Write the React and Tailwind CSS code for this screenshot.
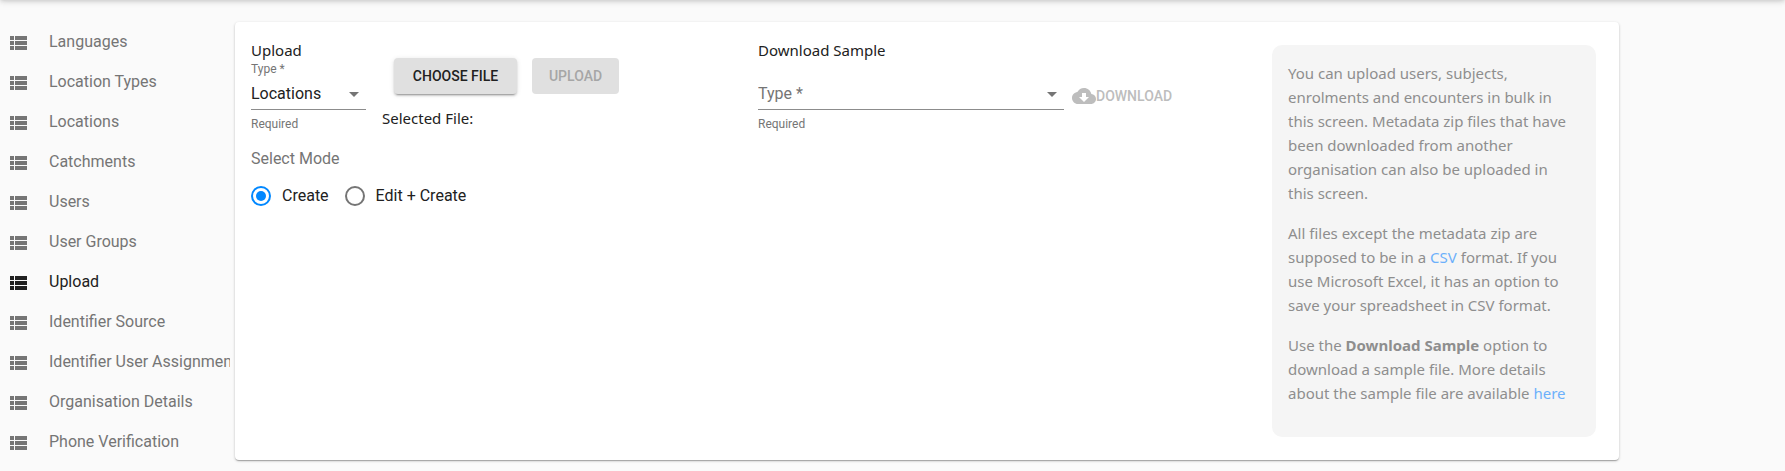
import { useState } from "react";

const NAV_ITEMS = [
  "Languages",
  "Location Types",
  "Locations",
  "Catchments",
  "Users",
  "User Groups",
  "Upload",
  "Identifier Source",
  "Identifier User Assignment",
  "Organisation Details",
  "Phone Verification",
];

function ListIcon() {
  return (
    <svg viewBox="0 0 24 24" className="mt-0.5 size-6 shrink-0 fill-current" aria-hidden="true">
      <path d="M4 14h4v-4H4v4zm0 5h4v-4H4v4zM4 9h4V5H4v4zm5 5h12v-4H9v4zm0 5h12v-4H9v4zM9 5v4h12V5H9z" />
    </svg>
  );
}

function ArrowIcon() {
  return (
    <svg viewBox="0 0 24 24" className="pointer-events-none absolute right-0 top-0 size-6 fill-[#757575]" aria-hidden="true">
      <path d="M7 10l5 5 5-5z" />
    </svg>
  );
}

function SideNav() {
  return (
    <nav className="w-[230px] shrink-0 overflow-hidden pt-[22px]">
      <ul>
        {NAV_ITEMS.map((item) => (
          <li key={item}>
            <a
              href="#"
              aria-current={item === "Upload" ? "page" : undefined}
              className={
                "flex h-10 items-center gap-[19px] whitespace-nowrap pl-1.5 " +
                (item === "Upload" ? "text-[#212121]" : "text-[#757575]")
              }
            >
              <ListIcon />
              <span>{item}</span>
            </a>
          </li>
        ))}
      </ul>
    </nav>
  );
}

function TypeSelect({ id, value, options, onChange }) {
  return (
    <div>
      <label
        htmlFor={id}
        className={"block h-4 text-xs leading-4 text-[#757575] " + (value ? "" : "invisible")}
      >
        Type *
      </label>
      <div className="relative mt-[5px] border-b border-[#8c8c8c] pb-[3px]">
        <select
          id={id}
          aria-label="Type"
          value={value}
          onChange={(e) => onChange(e.target.value)}
          className={
            "block h-6 w-full appearance-none bg-transparent pr-6 outline-none " +
            (value ? "text-[#212121]" : "text-[#757575]")
          }
        >
          <option value="">Type *</option>
          {options.map((o) => (
            <option key={o}>{o}</option>
          ))}
        </select>
        <ArrowIcon />
      </div>
      <p className="mt-1.5 text-xs leading-4 text-[#757575]">Required</p>
    </div>
  );
}

function ModeRadio({ label, checked, onChange }) {
  return (
    <label className="flex items-center gap-[11px]">
      <input
        type="radio"
        name="mode"
        checked={checked}
        onChange={onChange}
        className="size-5 appearance-none rounded-full border-2 border-[#757575] p-[3px] checked:border-[#0288ff] checked:bg-[#0288ff] bg-clip-content"
      />
      {label}
    </label>
  );
}

export default function App() {
  const [uploadType, setUploadType] = useState("Locations");
  const [sampleType, setSampleType] = useState("");
  const [mode, setMode] = useState("create");

  return (
    <div className="flex min-h-screen flex-col bg-[#fafafa] font-[Roboto,sans-serif] text-base text-[#212121]">
      <header className="-mt-[66px] mb-0.5 h-16 bg-white shadow-[0_2px_4px_-1px_rgba(0,0,0,0.14),0_4px_5px_0_rgba(0,0,0,0.1),0_1px_10px_0_rgba(0,0,0,0.1)]" />
      <div className="flex items-start gap-[5px]">
        <SideNav />
        <main className="mr-[166px] mt-[22px] flex flex-1 items-start rounded bg-white shadow-[0_1px_3px_0_rgba(0,0,0,0.2),0_1px_1px_0_rgba(0,0,0,0.14),0_2px_1px_-1px_rgba(0,0,0,0.12)]">
          <div className="flex flex-1 pl-4 pt-4">
            <section className="flex-1">
              <div className="flex">
                <div className="w-[115px]">
                  <h2 className="h-[23px] font-['Noto_Sans',sans-serif] text-[15px] leading-6">Upload</h2>
                  <TypeSelect id="upload-type" value={uploadType} options={["Locations", "Users"]} onChange={setUploadType} />
                </div>
                <div className="pl-4 pt-5">
                  <div className="flex gap-[15px] pl-3 text-sm font-medium">
                    <button type="button" className="h-9 w-[123px] rounded bg-[#e0e0e0] shadow-[0_3px_1px_-2px_rgba(0,0,0,0.2),0_2px_2px_0_rgba(0,0,0,0.14),0_1px_5px_0_rgba(0,0,0,0.12)]">
                      CHOOSE FILE
                    </button>
                    <button type="button" disabled className="h-9 w-[87px] rounded bg-[#e0e0e0] text-[#a6a6a6]">
                      UPLOAD
                    </button>
                  </div>
                  <p className="mt-3 font-['Noto_Sans',sans-serif] text-[15px] leading-6">Selected File:</p>
                </div>
              </div>
              <fieldset className="mt-[15px]">
                <legend className="leading-6 text-[#757575]">Select Mode</legend>
                <div className="mt-[13px] flex gap-4">
                  <ModeRadio label="Create" checked={mode === "create"} onChange={() => setMode("create")} />
                  <ModeRadio label="Edit + Create" checked={mode === "edit"} onChange={() => setMode("edit")} />
                </div>
              </fieldset>
            </section>
            <section className="flex-1">
              <h2 className="h-[23px] font-['Noto_Sans',sans-serif] text-[15px] leading-6">Download Sample</h2>
              <div className="flex gap-2">
                <div className="w-[306px]">
                  <TypeSelect id="sample-type" value={sampleType} options={["Locations", "Users"]} onChange={setSampleType} />
                </div>
                <button type="button" disabled className="mt-[23px] flex h-6 items-center text-sm font-medium text-[#bdbdbd]">
                  <svg viewBox="0 0 24 24" className="size-6 fill-current" aria-hidden="true">
                    <path d="M19.35 10.04C18.67 6.59 15.64 4 12 4 9.11 4 6.6 5.64 5.35 8.04 2.34 8.36 0 10.91 0 14c0 3.31 2.69 6 6 6h13c2.76 0 5-2.24 5-5 0-2.64-2.05-4.78-4.65-4.96zM17 13l-5 5-5-5h3V9h4v4h3z" />
                  </svg>
                  DOWNLOAD
                </button>
              </div>
            </section>
          </div>
          <aside className="my-[23px] ml-[7px] mr-[23px] w-[324px] shrink-0 space-y-4 rounded-[10px] bg-[#f5f5f5] pb-8 pl-4 pr-5 pt-4 font-['Noto_Sans',sans-serif] text-[15px] leading-6 text-[#8e8e8e]">
            <p>
              You can upload users, subjects, enrolments and encounters in bulk in this screen. Metadata zip files that
              have been downloaded from another organisation can also be uploaded in this screen.
            </p>
            <p>
              All files except the metadata zip are supposed to be in a <a href="#" className="text-[#6cb0fb]">CSV</a>{" "}
              format. If you use Microsoft Excel, it has an option to save your spreadsheet in CSV format.
            </p>
            <p>
              Use the <b>Download Sample</b> option to download a sample file. More details about the sample file are
              available <a href="#" className="text-[#6cb0fb]">here</a>
            </p>
          </aside>
        </main>
      </div>
    </div>
  );
}
